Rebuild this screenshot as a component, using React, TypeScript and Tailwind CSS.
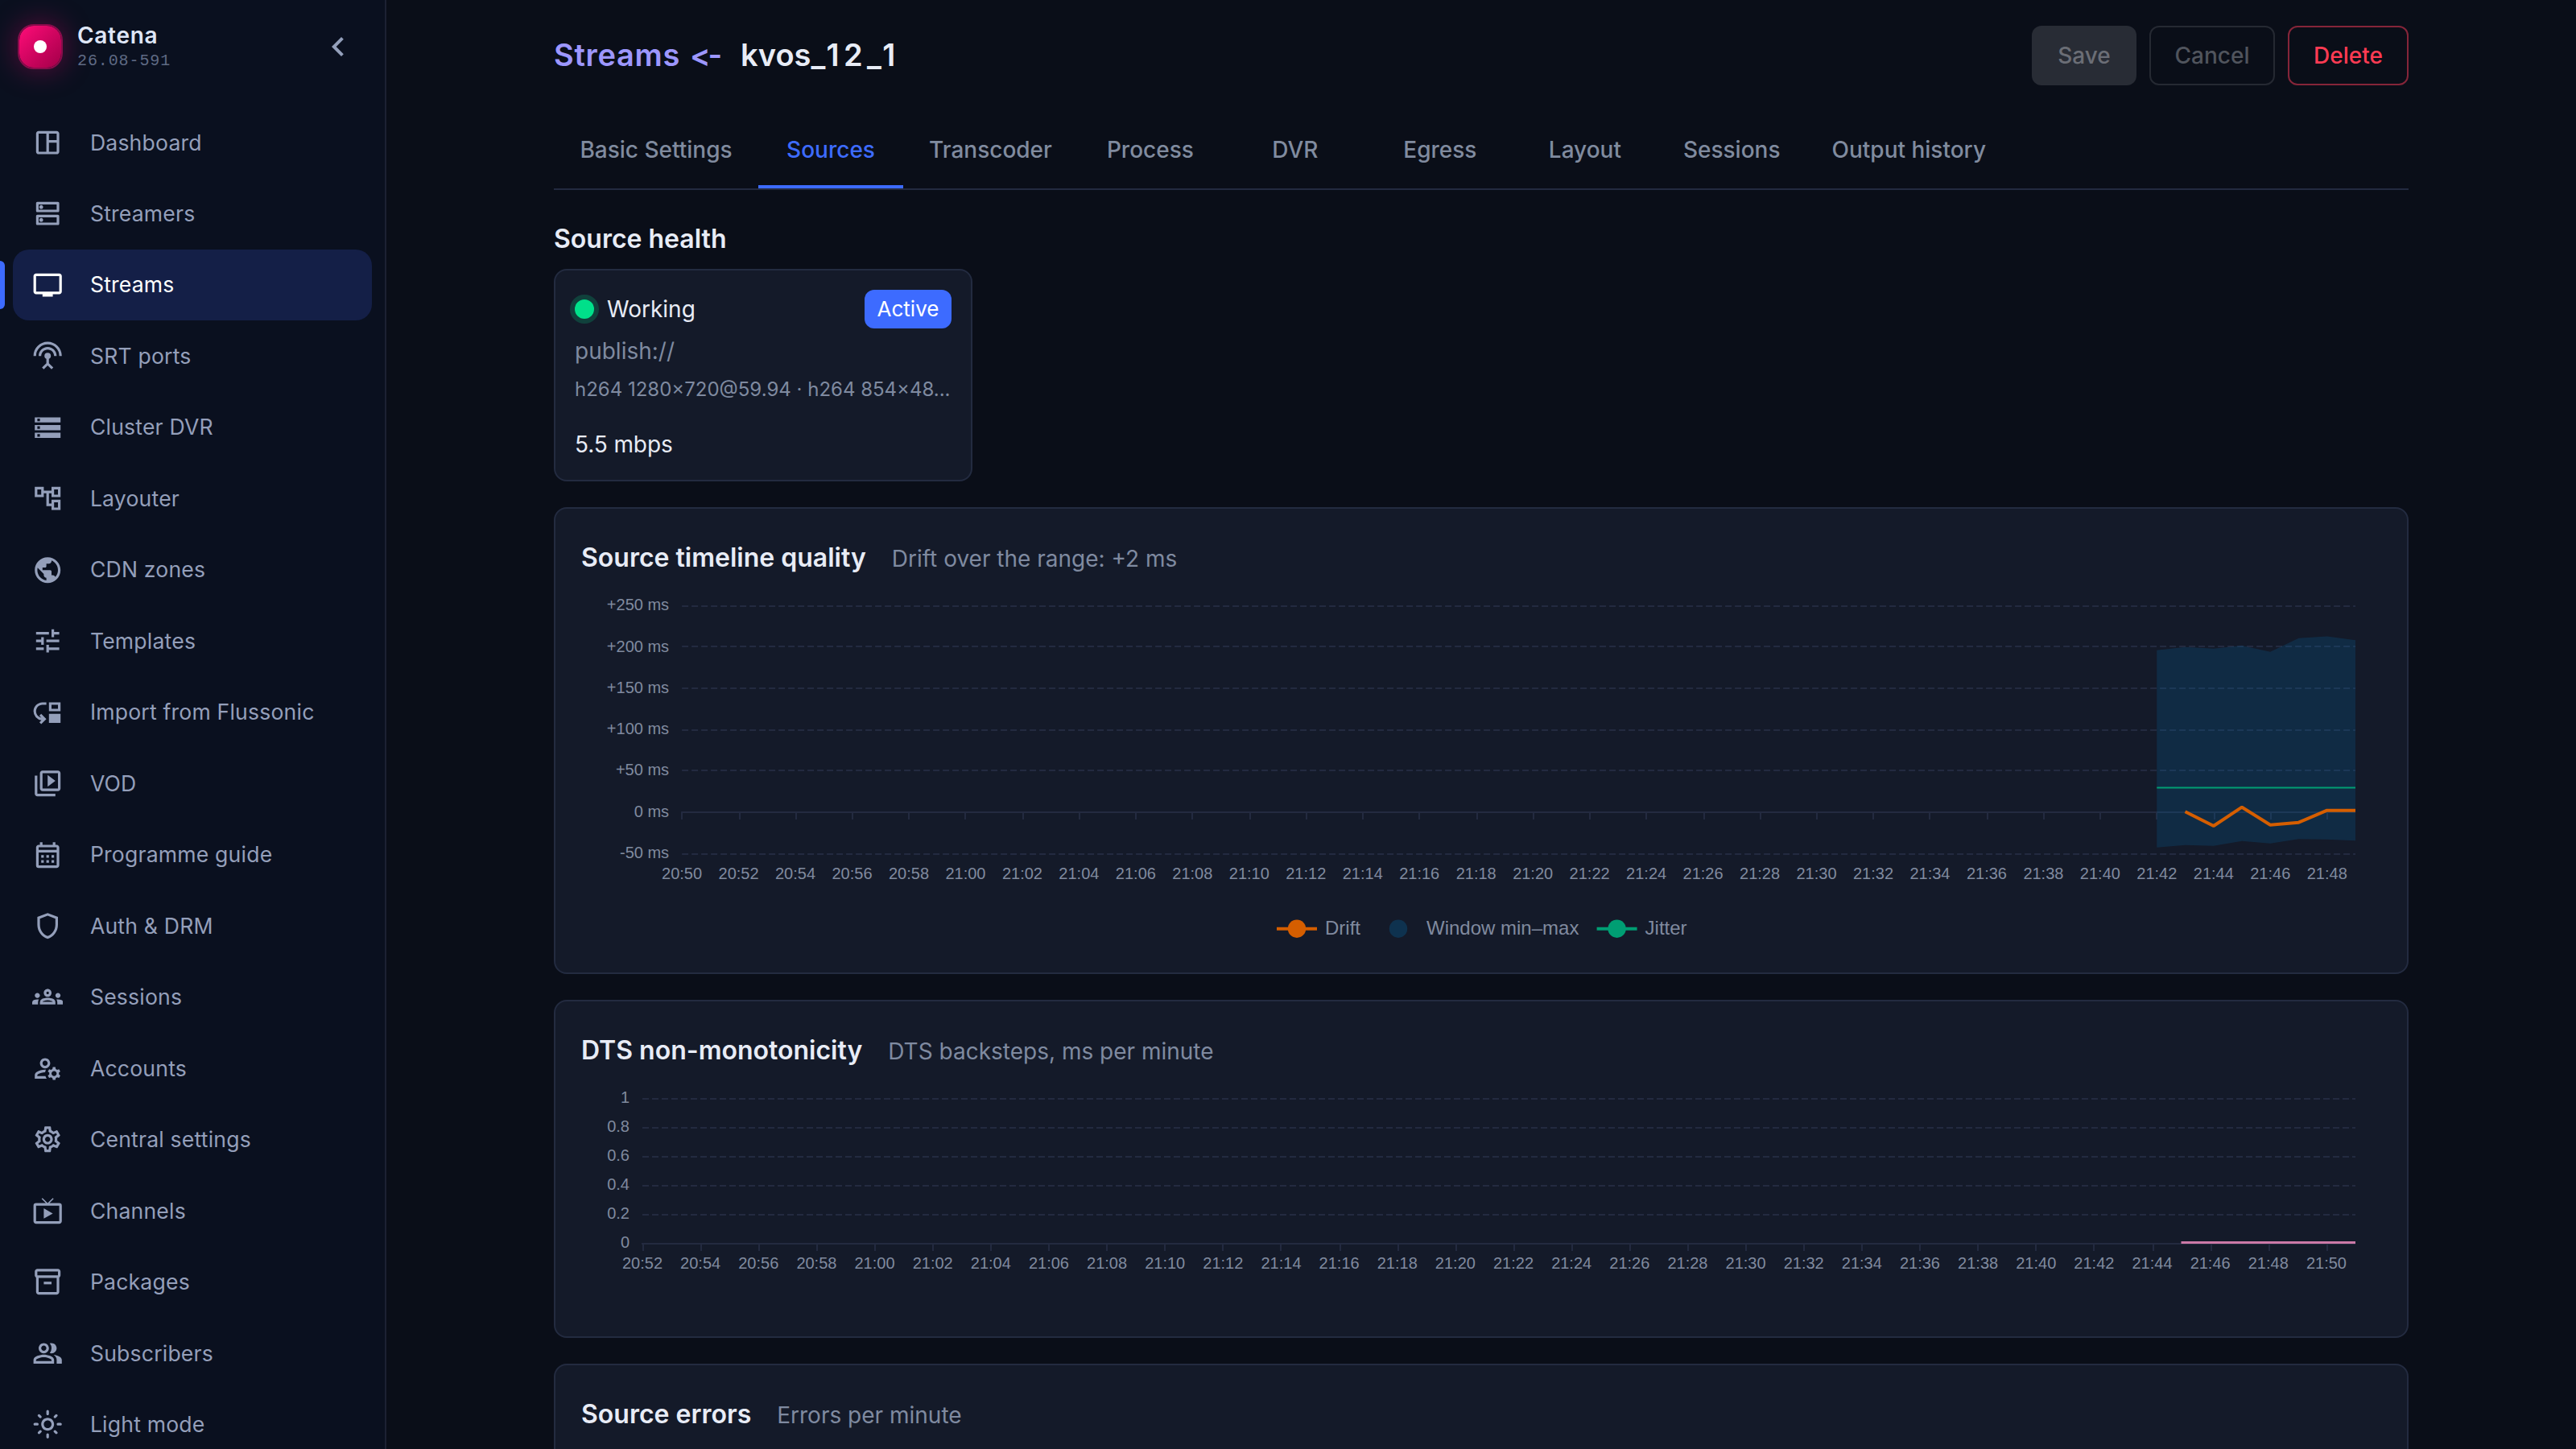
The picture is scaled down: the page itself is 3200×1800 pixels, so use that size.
import {
  MdChevronLeft,
  MdOutlineSpaceDashboard,
  MdOutlineDns,
  MdTv,
  MdSettingsInputAntenna,
  MdStorage,
  MdOutlineAccountTree,
  MdPublic,
  MdTune,
  MdMoveDown,
  MdOutlineVideoLibrary,
  MdOutlineCalendarMonth,
  MdOutlineShield,
  MdOutlineGroups,
  MdOutlineManageAccounts,
  MdOutlineSettings,
  MdLiveTv,
  MdOutlineInventory2,
  MdOutlinePeopleAlt,
  MdOutlineLightMode,
} from "react-icons/md";

const nav = [
  { label: "Dashboard", icon: MdOutlineSpaceDashboard },
  { label: "Streamers", icon: MdOutlineDns },
  { label: "Streams", icon: MdTv, active: true },
  { label: "SRT ports", icon: MdSettingsInputAntenna },
  { label: "Cluster DVR", icon: MdStorage },
  { label: "Layouter", icon: MdOutlineAccountTree },
  { label: "CDN zones", icon: MdPublic },
  { label: "Templates", icon: MdTune },
  { label: "Import from Flussonic", icon: MdMoveDown },
  { label: "VOD", icon: MdOutlineVideoLibrary },
  { label: "Programme guide", icon: MdOutlineCalendarMonth },
  { label: "Auth & DRM", icon: MdOutlineShield },
  { label: "Sessions", icon: MdOutlineGroups },
  { label: "Accounts", icon: MdOutlineManageAccounts },
  { label: "Central settings", icon: MdOutlineSettings },
  { label: "Channels", icon: MdLiveTv },
  { label: "Packages", icon: MdOutlineInventory2 },
  { label: "Subscribers", icon: MdOutlinePeopleAlt },
  { label: "Light mode", icon: MdOutlineLightMode },
];

const tabs = ["Basic Settings", "Sources", "Transcoder", "Process", "DVR", "Egress", "Layout", "Sessions", "Output history"];

const GRID = "#232a40";
const LABEL = "#808a9f";

// every second minute, as HH:MM
function timeLabels(startMinutes: number) {
  return Array.from({ length: 30 }, (_, i) => {
    const t = startMinutes + i * 2;
    return `${Math.floor(t / 60)}:${String(t % 60).padStart(2, "0")}`;
  });
}

function crisp(v: number) {
  const r = Math.round(v);
  return r % 2 ? r : r + 1;
}

function Axes({ left, rows, axisY, labelY, start }: any) {
  const step = (2926 - left) / 29.5;
  return (
    <g fontFamily="'Liberation Sans', Arial, sans-serif" fontSize="20" fill={LABEL}>
      {rows.map((r: any) => (
        <g key={r.label}>
          {r.y !== axisY && (
            <line x1={left} x2={2926} y1={r.y} y2={r.y} stroke={GRID} strokeWidth="2" strokeDasharray="8 4" />
          )}
          <text x={left - 16} y={r.ty} textAnchor="end">{r.label}</text>
        </g>
      ))}
      <line x1={left - 1} x2={2926} y1={axisY} y2={axisY} stroke={GRID} strokeWidth="2" />
      {timeLabels(start).map((t, i) => (
        <g key={t}>
          <line x1={crisp(left + i * step)} x2={crisp(left + i * step)} y1={axisY} y2={axisY + 9} stroke={GRID} strokeWidth="2" />
          <text x={left + i * step} y={labelY} textAnchor="middle">{t}</text>
        </g>
      ))}
    </g>
  );
}

function Panel({ title, hint, children }: any) {
  return (
    <section className="rounded-2xl border-2 border-[#232b40] bg-[#141a29] px-8 pt-8 pb-8">
      <div className="flex h-16 items-baseline gap-8 pt-[7px]">
        <h2 className="text-[32px] leading-[44px] font-semibold text-[#e8ecf6]">{title}</h2>
        <span className="text-[28px] leading-[44px] text-[#7f8aa0]">{hint}</span>
      </div>
      {children}
    </section>
  );
}

function TimelineChart() {
  const rows = [
    { label: "+250 ms", y: 753, ty: 758 },
    { label: "+200 ms", y: 803, ty: 810 },
    { label: "+150 ms", y: 855, ty: 861 },
    { label: "+100 ms", y: 907, ty: 912 },
    { label: "+50 ms", y: 957, ty: 963 },
    { label: "0 ms", y: 1009, ty: 1015 },
    { label: "-50 ms", y: 1061, ty: 1066 },
  ];
  return (
    <svg viewBox="722 728 2236 448" className="block h-[448px] w-[2236px]">
      <Axes left={847.1} rows={rows} axisY={1009} labelY={1092} start={20 * 60 + 50} />
      <polygon
        points="2679.3,807.7 2714.5,803.7 2749.8,805.7 2785,802 2820.2,809.7 2855.5,792.7 2890.7,790.5 2926,795.3 2926,1044.3 2890.7,1042.7 2855.5,1042.3 2820.2,1047.7 2785,1044.7 2749.8,1050.7 2714.5,1049.7 2679.3,1052.7"
        fill="#0072B2"
        fillOpacity="0.2"
      />
      <line x1="2679.3" x2="2926" y1="978.5" y2="978.5" stroke="#009E73" strokeWidth="2" />
      <polyline
        points="2714.5,1008.3 2749.8,1026 2785,1002.7 2820.2,1024.7 2855.5,1021.7 2890.7,1006.7 2926,1006.7"
        fill="none"
        stroke="#D55E00"
        strokeWidth="4"
        strokeLinejoin="bevel"
      />
      <g fontFamily="'Liberation Sans', Arial, sans-serif" fontSize="24" fill={LABEL}>
        <line x1="1586" x2="1636" y1="1153.7" y2="1153.7" stroke="#D55E00" strokeWidth="4" />
        <circle cx="1611" cy="1153.7" r="11.2" fill="#D55E00" />
        <text x="1646" y="1161">Drift</text>
        <circle cx="1737" cy="1153.7" r="11.2" fill="#0072B2" fillOpacity="0.28" />
        <text x="1772" y="1161">Window min–max</text>
        <line x1="1983.6" x2="2033.6" y1="1153.7" y2="1153.7" stroke="#009E73" strokeWidth="4" />
        <circle cx="2008.6" cy="1153.7" r="11.2" fill="#009E73" />
        <text x="2043.6" y="1161">Jitter</text>
      </g>
    </svg>
  );
}

function DtsChart() {
  const rows = ["1", "0.8", "0.6", "0.4", "0.2", "0"].map((label, i) => ({ label, y: 1365 + i * 36, ty: 1370 + i * 36 }));
  return (
    <svg viewBox="722 1340 2236 288" className="block h-[288px] w-[2236px]">
      <Axes left={798} rows={rows} axisY={1545} labelY={1576} start={20 * 60 + 52} />
      <line x1="2709.5" x2="2926" y1="1543.5" y2="1543.5" stroke="#CC79A7" strokeWidth="3" />
    </svg>
  );
}

function Sidebar() {
  return (
    <aside className="w-[480px] shrink-0 border-r-2 border-[#1c2133] bg-[#0a101f]">
      <div className="flex h-[132.8px] items-start pt-[30px] pl-[22px]">
        <div className="flex size-14 items-center justify-center rounded-[20px] border-2 border-[#8a0c4c] bg-gradient-to-br from-[#ff0d78] to-[#a30049] bg-clip-padding shadow-[0_0_36px_rgba(255,10,120,0.35)]">
          <div className="size-4 rounded-full bg-white" />
        </div>
        <div className="ml-[18px] flex-1">
          <div className="text-[28px] leading-[28px] font-semibold tracking-[0.7px] text-[#dfe6f7]">Catena</div>
          <div className="mt-2 font-['Liberation_Mono',monospace] text-[20px] leading-[20px] tracking-[0.9px] text-[#5f6a84]">26.08-591</div>
        </div>
        <MdChevronLeft className="mt-1 mr-[34px] size-12 text-[#94a0bb]" />
      </div>
      <nav>
        {nav.map(({ label, icon: Icon, active }) => (
          <a key={label} className="relative block h-[88.47px] pr-4 pl-4">
            {active && <span className="absolute top-[14px] left-0 h-[60px] w-[6px] rounded-r-md bg-[#3d6bff]" />}
            <div
              className={
                active
                  ? "flex h-full items-center rounded-[20px] bg-[#141f47] pl-6 text-white"
                  : "flex h-full items-center pl-6 text-[#949fba]"
              }
            >
              <Icon className="size-[38.4px]" />
              <span className="mb-px ml-[33.5px] text-[26.6px] leading-[40px] tracking-[0.19px]">{label}</span>
            </div>
          </a>
        ))}
      </nav>
    </aside>
  );
}

export default function App() {
  return (
    <div className="flex h-[1800px] w-[3200px] overflow-hidden bg-[#0a0e18] font-['Inter',sans-serif]">
      <Sidebar />
      <main className="flex-1 px-[208px]">
        <header className="flex h-[138px] items-start justify-between pt-8">
          <h1 className="flex text-[38px] leading-[73px] font-semibold text-[#e8ecf6] [font-feature-settings:'calt'_0]">
            <span className="w-[169px] tracking-[0.7px] text-[#9d97ff]">Streams</span>
            <span className="w-[63px] tracking-[-3px] text-[#9d97ff]">&lt;-</span>
            <span>kvos</span>
            <span className="tracking-[5.4px]">_12_1</span>
          </h1>
          <div className="flex gap-4 text-[28px] font-medium">
            <button className="h-[74px] w-[130px] rounded-xl bg-[#282c35] text-[#6b6e76]">Save</button>
            <button className="h-[74px] w-[156px] rounded-xl border-2 border-[#252932] text-[#50545d]">Cancel</button>
            <button className="h-[74px] w-[150px] rounded-xl border-2 border-[#852539] text-[#ff3b53]">Delete</button>
          </div>
        </header>

        <div className="flex h-[98px] border-b-2 border-[#232a40]">
          {tabs.map((t) => (
            <div
              key={t}
              className={
                t === "Sources"
                  ? "flex min-w-[180px] items-center justify-center border-b-4 border-[#3d6bff] px-8 pt-[3px] text-[28px] font-medium text-[#3d6bff]"
                  : "flex min-w-[180px] items-center justify-center border-b-4 border-transparent px-8 pt-[3px] text-[28px] font-medium text-[#808b9f] first:w-[254px]"
              }
            >
              {t}
            </div>
          ))}
        </div>

        <h2 className="mt-10 text-[32px] leading-[42px] font-semibold text-[#e8ecf6]">Source health</h2>
        <div className="mt-4 h-[264px] w-[520px] rounded-2xl border-2 border-[#232b40] bg-[#141a29] p-6">
          <div className="flex h-12 items-center">
            <span className="size-6 rounded-full bg-[#00e08a] ring-[6px] ring-[#00e08a]/20" />
            <span className="ml-4 flex-1 text-[28px] text-[#e8ecf6]">Working</span>
            <span className="flex h-12 w-[108px] items-center justify-center rounded-xl bg-[#3d6bff] pb-0.5 text-[26px] text-white">Active</span>
          </div>
          <div className="mt-2 text-[28px] leading-[40px] text-[#7f8aa0]">publish://</div>
          <div className="mt-[10px] truncate text-[24px] leading-[36px] text-[#7f8aa0]">h264 1280×720@59.94 · h264 854×48...</div>
          <div className="mt-[30px] text-[28px] leading-[40px] tracking-[-0.1px] text-[#e8ecf6]">5.5 mbps</div>
        </div>

        <div className="mt-8 flex flex-col gap-8">
          <Panel title="Source timeline quality" hint="Drift over the range: +2 ms">
            <TimelineChart />
          </Panel>
          <Panel title="DTS non-monotonicity" hint="DTS backsteps, ms per minute">
            <DtsChart />
          </Panel>
          <Panel title="Source errors" hint="Errors per minute">
            <div className="h-[400px]" />
          </Panel>
        </div>
      </main>
    </div>
  );
}
